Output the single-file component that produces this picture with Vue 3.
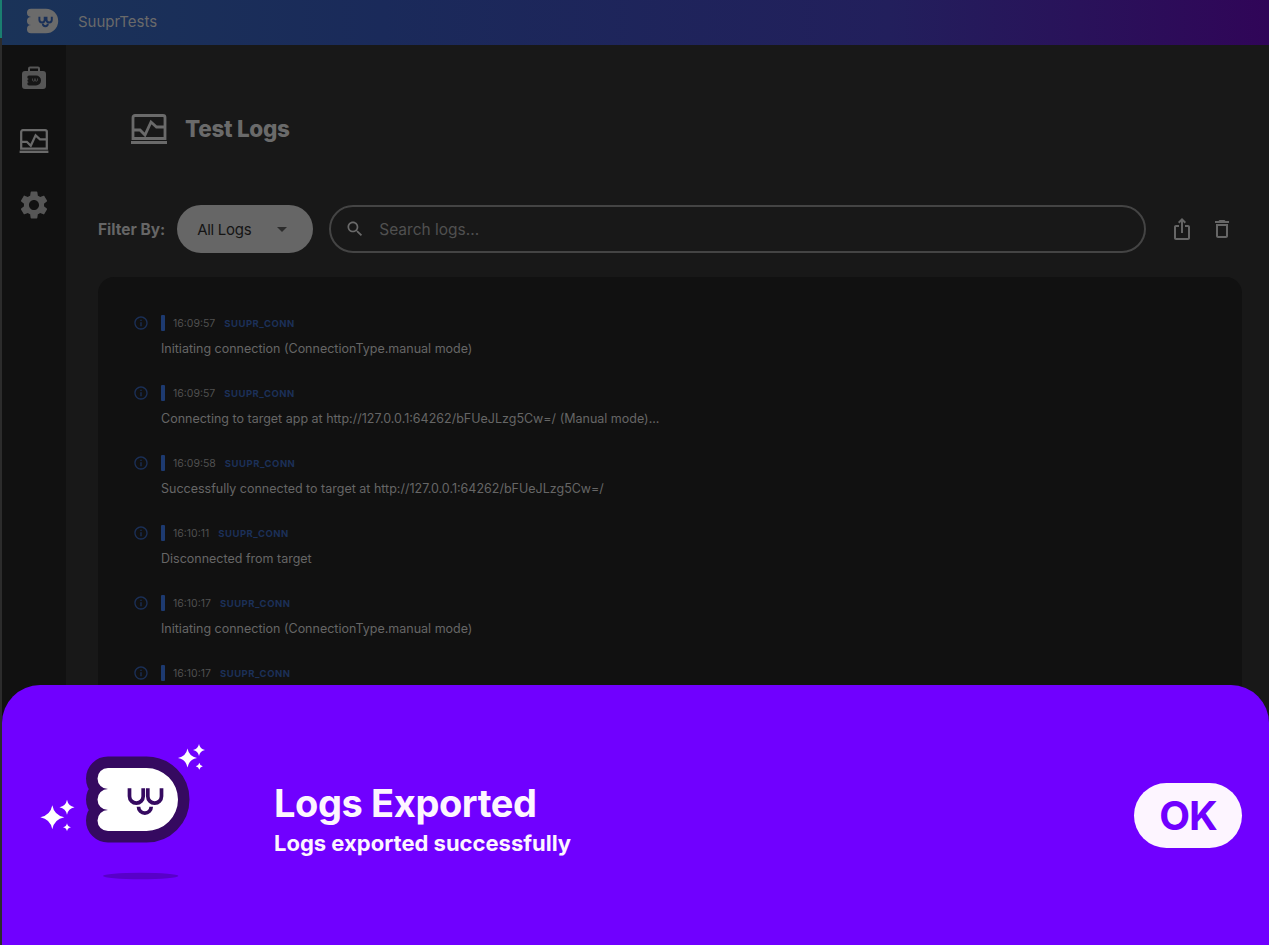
<template>
  <div class="app">
    <div class="edge"></div>
    <div class="shell">
      <header class="appbar">
        <svg class="bar-logo" viewBox="95 766 85 67">
          <path class="logo-body" :d="logoPath" />
          <path class="bar-face" :d="facePath" />
        </svg>
        <span class="app-name">SuuprTests</span>
      </header>

      <div class="body">
        <nav class="rail">
          <svg class="rail-icon case" viewBox="0 0 24 23">
            <path d="M6 5V2.500a2 2 0 0 1 2-2h8a2 2 0 0 1 2 2V5h3a3 3 0 0 1 3 3v12a3 3 0 0 1-3 3H3a3 3 0 0 1-3-3V8a3 3 0 0 1 3-3zm2 0h8V2.500H8z" fill-rule="evenodd" />
            <path class="case-mark" d="M7 9.500h7a5 5 0 0 1 0 10H7a1.700 1.700 0 0 1 0-3.400 1.600 1.600 0 0 1 0-3.200 1.700 1.700 0 0 1 0-3.400z" />
            <path class="case-face" d="M10.500 12.500v1.500a1.200 1.200 0 0 0 2.400 0v-1.500M13.100 12.500v1.500a1.200 1.200 0 0 0 2.400 0v-1.500" />
          </svg>
          <svg class="rail-icon monitor" viewBox="0 0 36 30">
            <path class="monitor-line" d="M4 1.500h28a2 2 0 0 1 2 2v21H2v-21a2 2 0 0 1 2-2z" />
            <path class="monitor-line" d="M2 16h7l5 5 6-13 5.500 5H34" />
            <path class="monitor-base" d="M0 27h36v3H0z" />
          </svg>
          <svg class="rail-icon gear" viewBox="2 2 20 20">
            <path d="M19.140 12.940c.040-.300.060-.610.060-.940 0-.320-.020-.640-.070-.940l2.030-1.580c.180-.140.230-.410.120-.610l-1.920-3.320c-.120-.220-.370-.290-.590-.220l-2.390.960c-.500-.380-1.030-.700-1.620-.940l-.360-2.540c-.040-.240-.240-.410-.480-.410h-3.840c-.240 0-.430.170-.470.410l-.360 2.540c-.590.240-1.130.570-1.620.940l-2.390-.960c-.220-.080-.470 0-.590.220L2.740 8.870c-.120.210-.080.470.120.610l2.030 1.580c-.050.300-.090.630-.090.940s.020.640.070.940l-2.030 1.580c-.180.140-.230.410-.120.610l1.920 3.320c.120.220.370.290.590.220l2.390-.960c.500.380 1.030.700 1.620.940l.360 2.540c.050.240.240.410.480.410h3.840c.240 0 .440-.170.470-.410l.360-2.540c.590-.240 1.130-.560 1.620-.940l2.390.960c.220.080.470 0 .590-.220l1.920-3.320c.120-.220.070-.470-.120-.610l-2.010-1.580zM12 15.600c-1.980 0-3.600-1.620-3.600-3.600s1.620-3.600 3.600-3.600 3.600 1.620 3.600 3.600-1.620 3.600-3.600 3.600z" />
          </svg>
        </nav>

        <main class="content">
          <div class="page-title">
            <svg class="title-icon" viewBox="0 0 36 30">
              <path class="monitor-line" d="M4 1.500h28a2 2 0 0 1 2 2v21H2v-21a2 2 0 0 1 2-2z" />
              <path class="monitor-line" d="M2 16h7l5 5 6-13 5.500 5H34" />
              <path class="monitor-base" d="M0 27h36v3H0z" />
            </svg>
            <h1>Test Logs</h1>
          </div>

          <div class="toolbar">
            <span class="filter-label">Filter By:</span>
            <div class="filter">
              <span>All Logs</span>
              <span class="caret"></span>
            </div>
            <div class="search">
              <svg viewBox="0 0 24 24" class="search-icon">
                <path d="M15.500 14h-.790l-.280-.270C15.410 12.590 16 11.110 16 9.500 16 5.910 13.090 3 9.500 3S3 5.910 3 9.500 5.910 16 9.500 16c1.610 0 3.090-.590 4.230-1.570l.270.280v.790l5 4.990L20.490 19l-4.990-5zm-6 0C7.010 14 5 11.990 5 9.500S7.010 5 9.500 5 14 7.010 14 9.500 11.990 14 9.500 14z" />
              </svg>
              <span>Search logs...</span>
            </div>
            <svg viewBox="0 0 24 24" class="tool-icon share">
              <path d="M16 5l-1.420 1.420-1.590-1.590V16h-1.980V4.830L9.420 6.420 8 5l4-4 4 4zm4 5v11c0 1.100-.900 2-2 2H6c-1.110 0-2-.900-2-2V10c0-1.110.890-2 2-2h3v2H6v11h12V10h-3V8h3c1.100 0 2 .890 2 2z" />
            </svg>
            <svg viewBox="0 0 24 24" class="tool-icon trash">
              <path d="M6 19c0 1.100.900 2 2 2h8c1.100 0 2-.900 2-2V7H6v12zM8 9h8v10H8V9zm7.500-5l-1-1h-5l-1 1H5v2h14V4h-3.500z" />
            </svg>
          </div>

          <section class="log-panel">
            <div v-for="(log, i) in logs" :key="i" class="log-row">
              <svg viewBox="0 0 24 24" class="info-icon">
                <path d="M11 7h2v2h-2zm0 4h2v6h-2zm1-9C6.480 2 2 6.480 2 12s4.480 10 10 10 10-4.480 10-10S17.520 2 12 2zm0 18c-4.410 0-8-3.590-8-8s3.590-8 8-8 8 3.590 8 8-3.590 8-8 8z" />
              </svg>
              <div class="log-main">
                <div class="log-head">
                  <span class="level-bar"></span>
                  <span class="log-time">{{ log.time }}</span>
                  <span class="log-tag">SUUPR_CONN</span>
                </div>
                <p class="log-msg">{{ log.msg }}</p>
              </div>
            </div>
          </section>
        </main>
      </div>
    </div>

    <div class="sheet">
      <svg class="sheet-logo" viewBox="38 742 170 146">
        <path class="spark" :d="star(187.500, 758, 9.500)" />
        <path class="spark" :d="star(199, 750, 6)" />
        <path class="spark" :d="star(199.300, 766.300, 3.500)" />
        <path class="spark" :d="star(52.300, 817.300, 12)" />
        <path class="spark" :d="star(67, 807.300, 7.500)" />
        <path class="spark" :d="star(67, 827.300, 4)" />
        <path class="logo-white" :d="logoPath" />
        <path class="logo-face" :d="facePath" />
        <ellipse cx="140.700" cy="876" rx="37.700" ry="3.200" fill="#5800c8" />
      </svg>
      <div class="sheet-text">
        <h2>Logs Exported</h2>
        <p>Logs exported successfully</p>
      </div>
      <button class="ok-btn">OK</button>
    </div>
  </div>
</template>

<script setup>
const logoPath =
  'M108 768H146.500A31.500 31.500 0 0 1 146.500 831H108A10.500 10.500 0 0 1 108 810A10.500 10.500 0 0 1 108 789A10.500 10.500 0 0 1 108 768Z'
const facePath =
  'M129.500 788.300V796.300A6.850 6.850 0 0 0 143.200 796.300V788.300M147.800 788.300V796.300A6.850 6.850 0 0 0 161.500 796.300V788.300M138.500 806.800A6.350 6.350 0 0 0 151.200 806.800'

const logs = [
  { time: '16:09:57', msg: 'Initiating connection (ConnectionType.manual mode)' },
  { time: '16:09:57', msg: 'Connecting to target app at http://127.0.0.1:64262/bFUeJLzg5Cw=/ (Manual mode)...' },
  { time: '16:09:58', msg: 'Successfully connected to target at http://127.0.0.1:64262/bFUeJLzg5Cw=/' },
  { time: '16:10:11', msg: 'Disconnected from target' },
  { time: '16:10:17', msg: 'Initiating connection (ConnectionType.manual mode)' },
  { time: '16:10:17', msg: 'Connecting to target app at http://127.0.0.1:64262/bFUeJLzg5Cw=/ (Manual mode)...' }
]

// four pointed sparkle around a centre
function star(x, y, r) {
  const k = r * 0.16
  return `M${x} ${y - r}Q${x + k} ${y - k} ${x + r} ${y}Q${x + k} ${y + k} ${x} ${y + r}Q${x - k} ${y + k} ${x - r} ${y}Q${x - k} ${y - k} ${x} ${y - r}Z`
}
</script>

<style>
html,
body {
  margin: 0;
  height: 100%;
  overflow: hidden;
  background: #181818;
}
</style>

<style scoped>
.app {
  position: relative;
  display: flex;
  height: 945px;
  overflow: hidden;
  font-family: Inter, "Noto Sans", sans-serif;
  background: #181818;
}

.edge {
  flex: 0 0 2px;
  background: linear-gradient(#1a7f70 0, #1a7f70 38px, #2c2c2c 38px);
}

.shell {
  flex: 1;
  display: flex;
  flex-direction: column;
  min-width: 0;
}

.appbar {
  flex: 0 0 45px;
  display: flex;
  align-items: center;
  padding-left: 24px;
  background: linear-gradient(90deg, #1a3358 0%, #1a2a5a 30%, #221f5c 70%, #300558 100%);
}

.bar-logo {
  width: 33px;
  height: 26px;
  margin-top: -3px;
}

.logo-body {
  fill: #6b6b6b;
}

.bar-face {
  fill: none;
  stroke: #1a3058;
  stroke-width: 5;
}

.app-name {
  margin: -2px 0 0 19px;
  font-size: 15px;
  color: #6a6a6a;
}

.body {
  flex: 1;
  display: flex;
  min-height: 0;
}

.rail {
  flex: 0 0 64px;
  display: flex;
  flex-direction: column;
  align-items: center;
  background: #111111;
}

.rail-icon {
  display: block;
  fill: #565656;
}

.case {
  width: 24px;
  height: 23px;
  margin-top: 21px;
}

.case-mark {
  fill: #161616;
}

.case-face {
  fill: none;
  stroke: #565656;
  stroke-width: 0.7;
}

.monitor {
  width: 30px;
  height: 24px;
  margin-top: 40px;
}

.gear {
  width: 28px;
  height: 28px;
  margin-top: 38px;
}

.monitor-line {
  fill: none;
  stroke: #6a6a6a;
  stroke-width: 2.800;
}

.monitor-base {
  fill: #6a6a6a;
}

.content {
  flex: 1;
  min-width: 0;
  padding: 0 27px 0 32px;
}

.page-title {
  display: flex;
  align-items: center;
  gap: 18px;
  margin-top: 69px;
  padding-left: 33px;
}

.title-icon {
  width: 36px;
  height: 30px;
}

.page-title h1 {
  margin: -2px 0 0;
  font-size: 22.500px;
  font-weight: 800;
  letter-spacing: -0.3px;
  color: #6a6a6a;
}

.toolbar {
  display: flex;
  align-items: center;
  height: 48px;
  margin-top: 61px;
}

.filter-label {
  font-size: 15.500px;
  font-weight: 700;
  color: #666666;
}

.filter {
  display: flex;
  align-items: center;
  justify-content: space-between;
  box-sizing: border-box;
  width: 136px;
  height: 48px;
  margin-left: 12px;
  padding: 0 26px 0 20px;
  border-radius: 24px;
  background: #666666;
  font-size: 15px;
  letter-spacing: -0.3px;
  color: #141414;
}

.caret {
  width: 0;
  height: 0;
  border-left: 5.500px solid transparent;
  border-right: 5.500px solid transparent;
  border-top: 5.500px solid #2c2c2c;
}

.search {
  flex: 1;
  display: flex;
  align-items: center;
  box-sizing: border-box;
  height: 48px;
  margin-left: 16px;
  padding-left: 14px;
  border: 2px solid #444444;
  border-radius: 24px;
  font-size: 15.500px;
  color: #505050;
}

.search-icon {
  width: 20px;
  height: 20px;
  margin-right: 14px;
  fill: #6a6a6a;
}

.tool-icon {
  width: 24px;
  height: 24px;
  fill: #666666;
}

.share {
  margin-left: 24px;
}

.trash {
  margin-left: 16px;
  margin-right: 8px;
}

.log-panel {
  height: 660px;
  margin-top: 24px;
  padding: 11px 35px;
  border-radius: 16px;
  background: #111111;
}

.log-row {
  display: flex;
  height: 70px;
  padding-top: 27px;
  box-sizing: border-box;
}

.info-icon {
  flex: 0 0 16px;
  width: 16px;
  height: 16px;
  fill: #1b3058;
}

.log-main {
  margin-left: 12px;
}

.log-head {
  display: flex;
  align-items: center;
  height: 16px;
}

.level-bar {
  width: 4px;
  height: 16px;
  border-radius: 1px;
  background: #1d3a70;
}

.log-time {
  margin-left: 8px;
  font-size: 10.500px;
  color: #505050;
}

.log-tag {
  margin-left: 9px;
  font-size: 9.500px;
  font-weight: 700;
  letter-spacing: 0.5px;
  color: #1c3058;
}

.log-msg {
  margin: 8px 0 0;
  font-size: 12.500px;
  line-height: 20px;
  color: #666666;
}

.sheet {
  position: absolute;
  left: 2px;
  right: 0;
  bottom: 0;
  height: 260px;
  display: flex;
  align-items: center;
  padding: 0 27px 0 36px;
  border-radius: 38px 38px 0 0;
  background: #7000ff;
}

.sheet-logo {
  flex: 0 0 170px;
  width: 170px;
  height: 146px;
}

.spark,
.logo-white {
  fill: #ffffff;
}

.logo-white {
  stroke: #350a60;
  stroke-width: 23;
  stroke-linejoin: round;
  paint-order: stroke;
}

.logo-face {
  fill: none;
  stroke: #350a60;
  stroke-width: 3.700;
}

.sheet-text {
  flex: 1;
  margin-left: 66px;
  padding-top: 7px;
  color: #fdf5ff;
}

.sheet-text h2 {
  margin: 0;
  font-size: 38px;
  line-height: 46px;
  font-weight: 700;
  letter-spacing: -0.4px;
}

.sheet-text p {
  margin: 2px 0 0;
  font-size: 22px;
  line-height: 30px;
  font-weight: 700;
}

.ok-btn {
  width: 108px;
  height: 65px;
  border: none;
  border-radius: 33px;
  background: #fdf5ff;
  font-family: inherit;
  font-size: 40px;
  font-weight: 700;
  letter-spacing: -1px;
  color: #7000ff;
}
</style>
